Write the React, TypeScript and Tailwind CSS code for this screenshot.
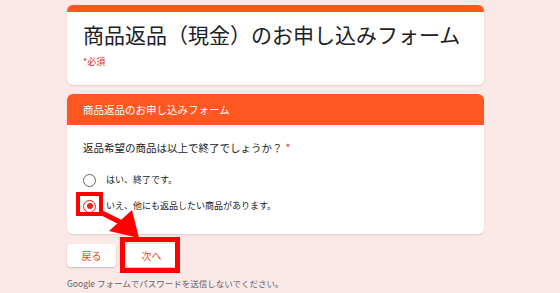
export default function App() {
  return (
    <div className="relative h-[293px] w-[560px] overflow-hidden bg-[#fbe9e7] font-['Noto_Sans_CJK_JP','Noto_Sans',sans-serif]">
      <div className="ml-[67px] w-[417px] pt-[5px]">
        {/* Title card */}
        <div className="h-[80px] rounded-[6px] border-t-[7px] border-[#ff5722] bg-white pl-4 pt-[9px] shadow-[0_1px_2px_rgba(0,0,0,0.12)]">
          <h1 className="text-[21px] leading-[27px] text-[#202124]">商品返品（現金）のお申し込みフォーム</h1>
          <p className="mt-[7px] text-[9px] leading-[14px] text-[#d93025]">*必須</p>
        </div>

        {/* Section card */}
        <div className="mt-[9px] overflow-hidden rounded-[6px] bg-white shadow-[0_1px_2px_rgba(0,0,0,0.12)]">
          <div className="flex h-[31px] items-center bg-[#ff5722] pl-4 text-[10.5px] text-white">
            商品返品のお申し込みフォーム
          </div>
          <div className="px-4 pb-[20px] pt-[15px]">
            <p className="text-[10.5px] leading-[16px] text-[#202124]">
              返品希望の商品は以上で終了でしょうか？<span className="ml-[3px] text-[#d93025]">*</span>
            </p>
            <div className="mt-[16px] flex flex-col gap-[10px]">
              <label className="flex h-[16px] items-center gap-[10px] text-[9px] text-[#202124]">
                <span className="h-[13px] w-[13px] rounded-full border-[1.5px] border-[#5f6368]" />
                はい、終了です。
              </label>
              <label className="flex h-[16px] items-center gap-[10px] text-[9px] text-[#202124]">
                <span className="flex h-[13px] w-[13px] items-center justify-center rounded-full border-[1.5px] border-[#ff1a1a]">
                  <span className="h-[6px] w-[6px] rounded-full bg-[#ff1a1a]" />
                </span>
                いえ、他にも返品したい商品があります。
              </label>
            </div>
          </div>
        </div>

        {/* Buttons */}
        <div className="mt-[10px] flex gap-[10px]">
          <button className="h-[23px] w-[49px] rounded-[4px] bg-white text-[10px] text-[#e64a19] shadow-[0_1px_2px_rgba(0,0,0,0.2)]">
            戻る
          </button>
          <button className="h-[23px] w-[51px] rounded-[4px] bg-white text-[10px] text-[#e64a19] shadow-[0_1px_2px_rgba(0,0,0,0.2)]">
            次へ
          </button>
        </div>

        <p className="mt-[10px] text-[8.5px] leading-[12px] text-[#5f6368]">
          Google フォームでパスワードを送信しないでください。
        </p>
      </div>

      {/* Red annotation overlays */}
      <div className="absolute left-[76px] top-[192px] h-[24px] w-[27px] border-[4px] border-[#ff0000]" />
      <div className="absolute left-[120px] top-[237px] h-[36px] w-[60px] border-[5px] border-[#ff0000]" />
      <svg className="absolute left-0 top-0" width="560" height="293">
        <line x1="100" y1="212" x2="122" y2="223" stroke="#ff0000" strokeWidth="5" />
        <polygon points="109,231 132,210 139,238" fill="#ff0000" />
      </svg>
    </div>
  )
}
